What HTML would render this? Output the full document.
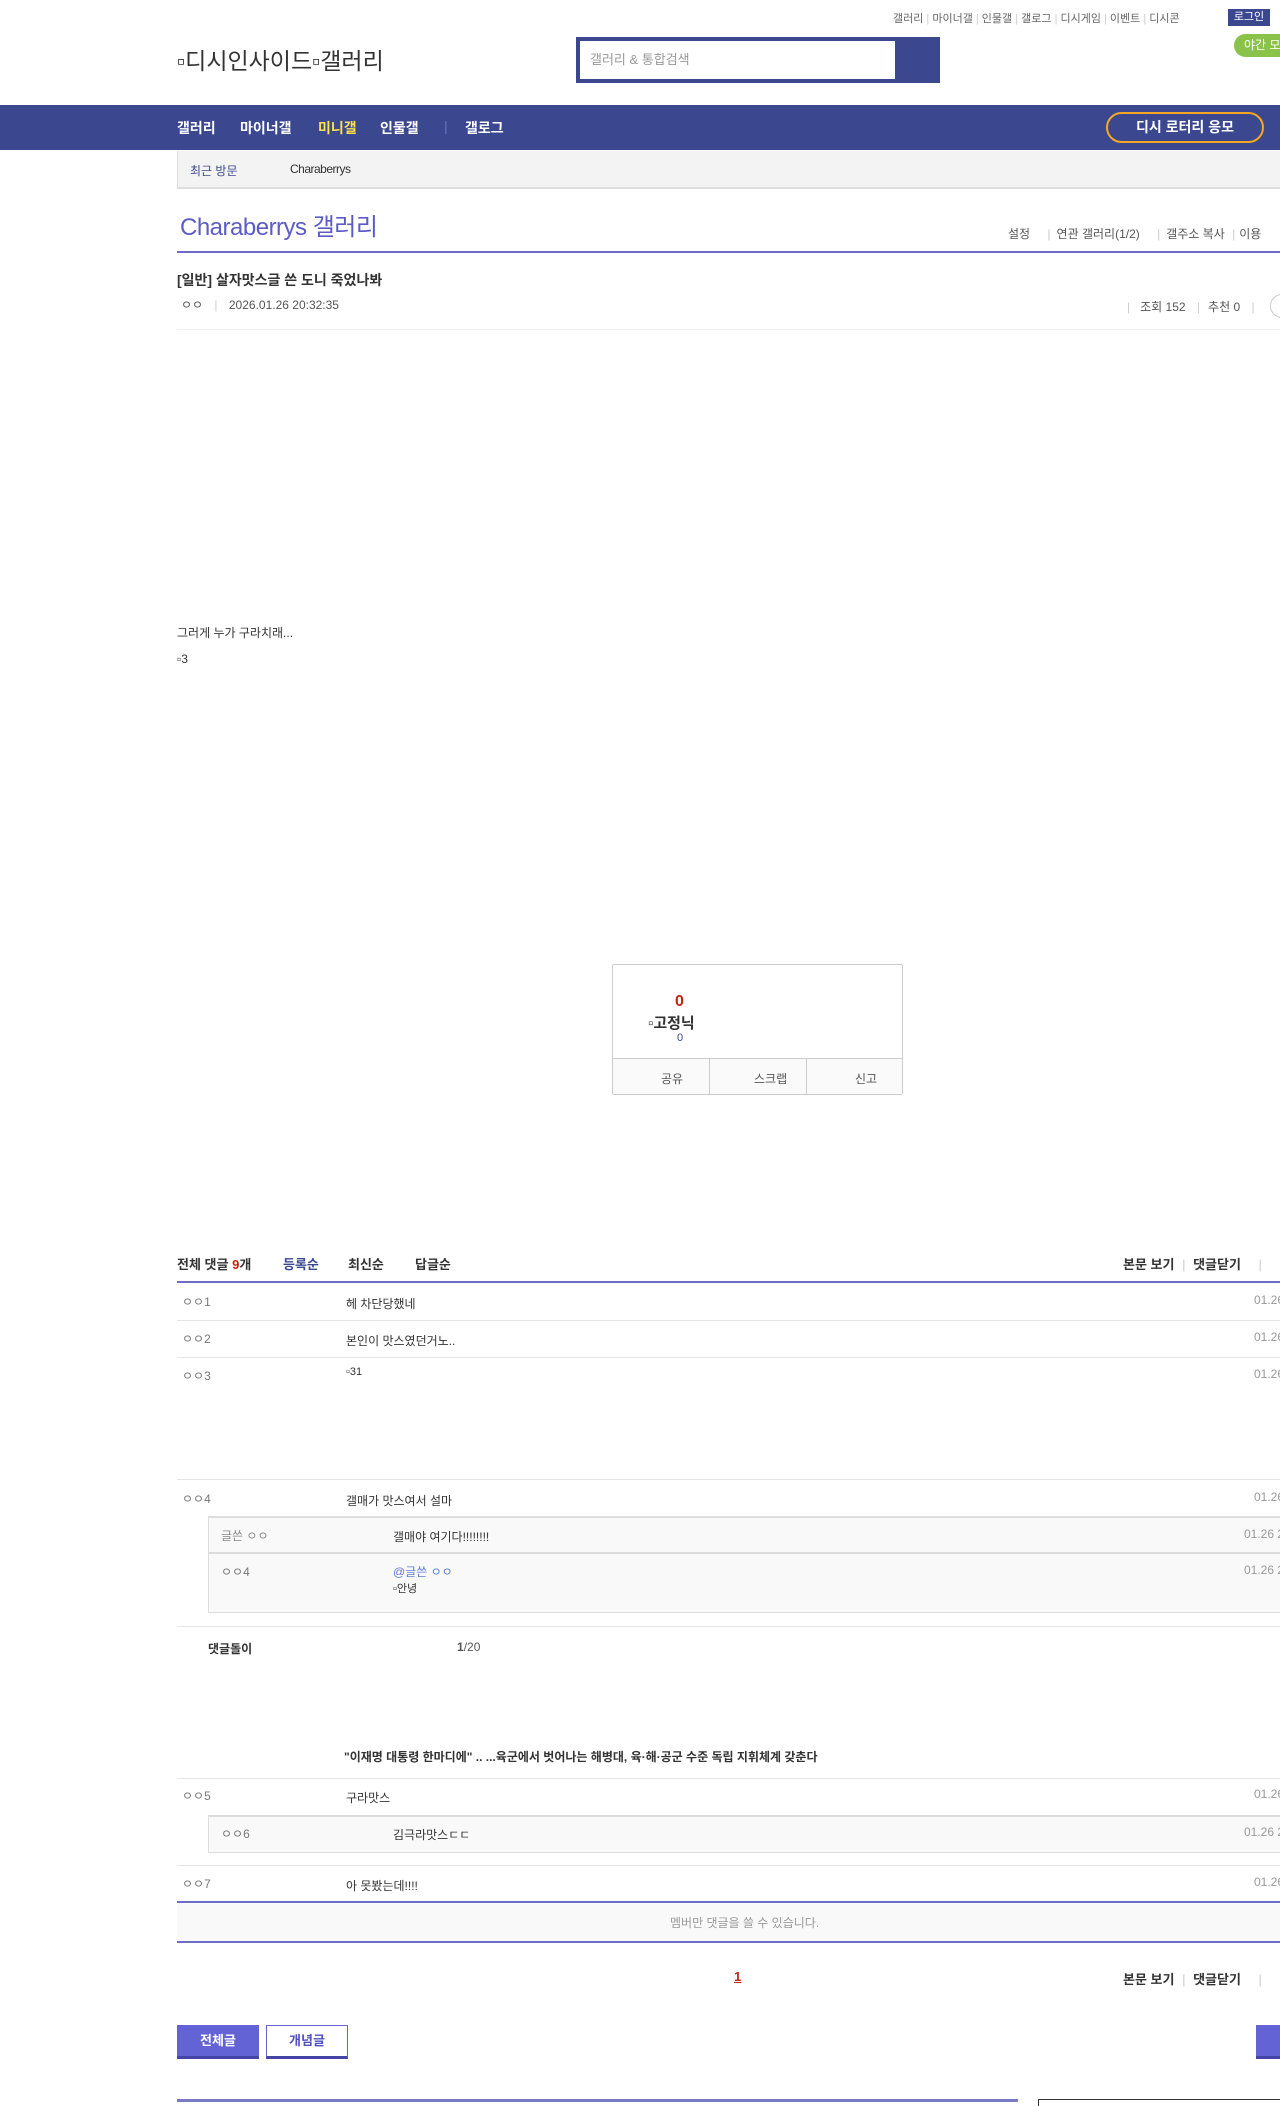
<!DOCTYPE html>
<html><head><meta charset="utf-8"><style>
*{margin:0;padding:0;box-sizing:border-box}
html,body{width:1280px;height:2106px;overflow:hidden;background:#fff}
body{position:relative;font-family:"Liberation Sans","Noto Sans CJK KR",sans-serif;font-size:12px;color:#333}
.a{position:absolute;white-space:nowrap}
.hl{position:absolute;height:1px;background:#e5e5e5}
.pl{position:absolute;height:2px;background:#6d6dc9}
.nav span{position:absolute;top:13px;color:#fff;font-weight:bold;font-size:14px}
.nm{color:#777;font-size:12px}
.ct{font-size:12px;color:#333}
.dt{color:#999;font-size:12px}
</style></head><body>

<div class="a" style="left:893px;top:10px;font-size:11px;color:#666">갤러리 <span style="color:#ccc">|</span> 마이너갤 <span style="color:#ccc">|</span> 인물갤 <span style="color:#ccc">|</span> 갤로그 <span style="color:#ccc">|</span> 디시게임 <span style="color:#ccc">|</span> 이벤트 <span style="color:#ccc">|</span> 디시콘</div>
<div class="a" style="left:1228px;top:9px;width:42px;height:17px;background:#3b4890;color:#fff;font-size:11px;line-height:17px;text-align:center">로그인</div>
<div class="a" style="left:1234px;top:34px;width:60px;height:23px;background:#8bc34a;border-radius:12px;color:#fff;font-size:12px;line-height:23px;padding-left:10px">야간 모드</div>

<div class="a" style="left:177px;top:42px;font-size:23px;color:#333">▫디시인사이드▫갤러리</div>

<div class="a" style="left:576px;top:37px;width:364px;height:46px;background:#3b4890"></div>
<div class="a" style="left:580px;top:41px;width:315px;height:38px;background:#fff;color:#999;font-size:13px;line-height:38px;padding-left:10px">갤러리 &amp; 통합검색</div>

<div class="a nav" style="left:0;top:105px;width:1280px;height:45px;background:#3b4890">
<span style="left:177px">갤러리</span>
<span style="left:240px">마이너갤</span>
<span style="left:318px;color:#ffe24a">미니갤</span>
<span style="left:380px">인물갤</span>
<span style="left:444px;color:#6a76b5;font-weight:normal">|</span>
<span style="left:465px">갤로그</span>
<div style="position:absolute;left:1106px;top:7px;width:158px;height:31px;border:2px solid #f5a623;border-radius:16px;color:#fff;font-weight:bold;font-size:14px;line-height:27px;text-align:center">디시 로터리 응모</div>
</div>

<div class="a" style="left:177px;top:151px;width:1103px;height:38px;background:#f3f3f3;border-left:1px solid #ddd;border-bottom:2px solid #ddd"></div>
<div class="a" style="left:190px;top:162px;color:#3b4890;font-size:12px">최근 방문</div>
<div class="a" style="left:290px;top:162px;color:#333;font-size:12px;letter-spacing:-0.5px">Charaberrys</div>

<div class="a" style="left:180px;top:207px;font-size:24px;color:#5c5cc4;letter-spacing:-0.5px">Charaberrys 갤러리</div>
<div class="a" style="left:1008px;top:225px;font-size:12px;color:#555">설정 <span style="color:#ccc;margin:0 6px 0 14px">|</span>연관 갤러리(1/2) <span style="color:#ccc;margin:0 6px 0 14px">|</span>갤주소 복사 <span style="color:#ccc;margin:0 4px">|</span>이용</div>
<div class="pl" style="left:177px;top:251px;width:1103px"></div>

<div class="a" style="left:177px;top:270px;font-size:14px;font-weight:bold;color:#333">[일반] 살자맛스글 쓴 도니 죽었나봐</div>
<div class="a" style="left:181px;top:296px;font-size:12px;color:#555">ㅇㅇ <span style="color:#ccc;margin:0 8px">|</span> 2026.01.26 20:32:35</div>
<div class="a" style="left:1127px;top:298px;font-size:12px;color:#555"><span style="color:#ccc;margin-right:10px">|</span>조회 152 <span style="color:#ccc;margin:0 8px">|</span>추천 0 <span style="color:#ccc;margin:0 8px">|</span></div>
<div class="a" style="left:1270px;top:294px;width:24px;height:24px;border:1px solid #ccc;border-radius:50%"></div>
<div class="hl" style="left:177px;top:329px;width:1103px;background:#eee"></div>

<div class="a" style="left:177px;top:624px;font-size:12px;color:#333">그러게 누가 구라치래...</div>
<div class="a" style="left:177px;top:652px;font-size:12px;color:#333">▫3</div>

<div class="a" style="left:612px;top:964px;width:291px;height:131px;border:1px solid #ccc;border-radius:2px"></div>
<div class="a" style="left:613px;top:1058px;width:289px;height:36px;background:#fafafa;border-top:1px solid #ccc"></div>
<div class="a" style="left:709px;top:1058px;width:1px;height:37px;background:#ccc"></div>
<div class="a" style="left:806px;top:1058px;width:1px;height:37px;background:#ccc"></div>
<div class="a" style="left:675px;top:993px;font-size:16px;font-weight:bold;color:#c4240f">0</div>
<div class="a" style="left:648px;top:1012px;font-size:15px;font-weight:bold;color:#333">▫고정닉</div>
<div class="a" style="left:677px;top:1032px;font-size:11px;color:#3b4890">0</div>
<div class="a" style="left:661px;top:1070px;font-size:12px;color:#555">공유</div>
<div class="a" style="left:754px;top:1070px;font-size:12px;color:#555">스크랩</div>
<div class="a" style="left:855px;top:1070px;font-size:12px;color:#555">신고</div>

<div class="a" style="left:177px;top:1254px;font-size:13px;font-weight:bold;color:#333">전체 댓글 <span style="color:#c4240f">9</span>개</div>
<div class="a" style="left:283px;top:1254px;font-size:13px;font-weight:bold;color:#3b4890">등록순</div>
<div class="a" style="left:348px;top:1254px;font-size:13px;font-weight:bold;color:#333">최신순</div>
<div class="a" style="left:415px;top:1254px;font-size:13px;font-weight:bold;color:#333">답글순</div>
<div class="a" style="left:1123px;top:1254px;font-size:13px;font-weight:bold;color:#333">본문 보기 <span style="color:#ccc;font-weight:normal;margin:0 4px">|</span> 댓글닫기 <span style="color:#ccc;font-weight:normal;margin-left:14px">|</span></div>
<div class="pl" style="left:177px;top:1281px;width:1103px"></div>

<div class="a nm" style="left:182px;top:1293px">ㅇㅇ1</div><div class="a ct" style="left:346px;top:1295px">헤 차단당했네</div><div class="a dt" style="left:1254px;top:1293px">01.26</div>
<div class="hl" style="left:177px;top:1320px;width:1103px"></div>
<div class="a nm" style="left:182px;top:1330px">ㅇㅇ2</div><div class="a ct" style="left:346px;top:1332px">본인이 맛스였던거노..</div><div class="a dt" style="left:1254px;top:1330px">01.26</div>
<div class="hl" style="left:177px;top:1357px;width:1103px"></div>
<div class="a nm" style="left:182px;top:1367px">ㅇㅇ3</div><div class="a" style="left:346px;top:1366px;font-size:11px">▫31</div><div class="a dt" style="left:1254px;top:1367px">01.26</div>
<div class="hl" style="left:177px;top:1479px;width:1103px"></div>
<div class="a nm" style="left:182px;top:1490px">ㅇㅇ4</div><div class="a ct" style="left:346px;top:1492px">갤매가 맛스여서 설마</div><div class="a dt" style="left:1254px;top:1490px">01.26</div>

<div class="a" style="left:208px;top:1516px;width:1072px;height:97px;background:#f9f9f9;border:1px solid #ddd;border-top:2px solid #ddd;border-right:none"></div>
<div class="hl" style="left:209px;top:1552px;width:1071px;height:2px;background:#ddd"></div>
<div class="a nm" style="left:221px;top:1527px;color:#888">글쓴 ㅇㅇ</div><div class="a ct" style="left:393px;top:1528px">갤매야 여기다!!!!!!!!</div><div class="a dt" style="left:1244px;top:1527px">01.26 2</div>
<div class="a nm" style="left:221px;top:1563px">ㅇㅇ4</div><div class="a" style="left:393px;top:1563px;color:#5c7fd4">@글쓴 ㅇㅇ</div><div class="a" style="left:393px;top:1580px;font-size:11px">▫안녕</div><div class="a dt" style="left:1244px;top:1563px">01.26 2</div>
<div class="hl" style="left:177px;top:1626px;width:1103px"></div>

<div class="a" style="left:208px;top:1640px;font-size:12px;font-weight:bold;color:#333">댓글돌이</div>
<div class="a" style="left:457px;top:1640px;font-size:12px;color:#555"><b>1</b>/20</div>

<div class="a" style="left:344px;top:1748px;font-size:12px;font-weight:bold;color:#333">"이재명 대통령 한마디에" .. ...육군에서 벗어나는 해병대, 육·해·공군 수준 독립 지휘체계 갖춘다</div>
<div class="hl" style="left:177px;top:1778px;width:1103px"></div>
<div class="a nm" style="left:182px;top:1787px">ㅇㅇ5</div><div class="a ct" style="left:346px;top:1789px">구라맛스</div><div class="a dt" style="left:1254px;top:1787px">01.26</div>
<div class="a" style="left:208px;top:1815px;width:1072px;height:38px;background:#f9f9f9;border:1px solid #ddd;border-top:2px solid #ddd;border-right:none"></div>
<div class="a nm" style="left:221px;top:1825px">ㅇㅇ6</div><div class="a ct" style="left:393px;top:1826px">김극라맛스ㄷㄷ</div><div class="a dt" style="left:1244px;top:1825px">01.26 2</div>
<div class="hl" style="left:177px;top:1865px;width:1103px"></div>
<div class="a nm" style="left:182px;top:1875px">ㅇㅇ7</div><div class="a ct" style="left:346px;top:1877px">아 못봤는데!!!!</div><div class="a dt" style="left:1254px;top:1875px">01.26</div>

<div class="pl" style="left:177px;top:1901px;width:1103px"></div>
<div class="a" style="left:177px;top:1903px;width:1103px;height:38px;background:#f9f9f9"></div>
<div class="a" style="left:670px;top:1914px;font-size:12px;color:#999">멤버만 댓글을 쓸 수 있습니다.</div>
<div class="pl" style="left:177px;top:1941px;width:1103px"></div>

<div class="a" style="left:734px;top:1969px;font-size:13px;font-weight:bold;color:#c4240f;text-decoration:underline">1</div>
<div class="a" style="left:1123px;top:1969px;font-size:13px;font-weight:bold;color:#333">본문 보기 <span style="color:#ccc;font-weight:normal;margin:0 4px">|</span> 댓글닫기 <span style="color:#ccc;font-weight:normal;margin-left:14px">|</span></div>

<div class="a" style="left:177px;top:2025px;width:82px;height:34px;background:#6363d6;border-bottom:3px solid #4545a8;color:#fff;font-size:13px;font-weight:bold;line-height:31px;text-align:center">전체글</div>
<div class="a" style="left:266px;top:2025px;width:82px;height:34px;background:#fff;border:1px solid #6363d6;border-bottom:3px solid #4545a8;color:#5050c0;font-size:13px;font-weight:bold;line-height:30px;text-align:center">개념글</div>
<div class="a" style="left:1256px;top:2025px;width:40px;height:34px;background:#6363d6;border-bottom:3px solid #4545a8"></div>

<div class="a" style="left:177px;top:2099px;width:841px;height:3px;background:#7a7ac6"></div>
<div class="a" style="left:1038px;top:2099px;width:260px;height:10px;border:1px solid #333"></div>
</body></html>
